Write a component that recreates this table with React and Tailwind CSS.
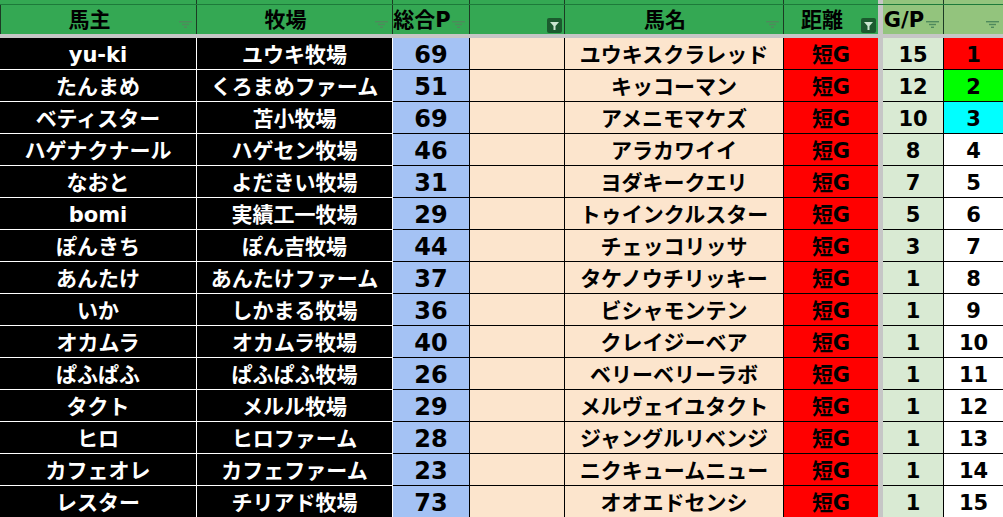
const rows = [
  ['yu-ki', 'ユウキ牧場', 69, 'ユウキスクラレッド', 15, 1],
  ['たんまめ', 'くろまめファーム', 51, 'キッコーマン', 12, 2],
  ['ベティスター', '苫小牧場', 69, 'アメニモマケズ', 10, 3],
  ['ハゲナクナール', 'ハゲセン牧場', 46, 'アラカワイイ', 8, 4],
  ['なおと', 'よだきい牧場', 31, 'ヨダキークエリ', 7, 5],
  ['bomi', '実績工一牧場', 29, 'トゥインクルスター', 5, 6],
  ['ぽんきち', 'ぽん吉牧場', 44, 'チェッコリッサ', 3, 7],
  ['あんたけ', 'あんたけファーム', 37, 'タケノウチリッキー', 1, 8],
  ['いか', 'しかまる牧場', 36, 'ビシャモンテン', 1, 9],
  ['オカムラ', 'オカムラ牧場', 40, 'クレイジーベア', 1, 10],
  ['ぱふぱふ', 'ぱふぱふ牧場', 26, 'ベリーベリーラボ', 1, 11],
  ['タクト', 'メルル牧場', 29, 'メルヴェイユタクト', 1, 12],
  ['ヒロ', 'ヒロファーム', 28, 'ジャングルリベンジ', 1, 13],
  ['カフェオレ', 'カフェファーム', 23, 'ニクキュームニュー', 1, 14],
  ['レスター', 'チリアド牧場', 73, 'オオエドセンシ', 1, 15],
]

const grid = 'grid grid-cols-[197px_196px_77px_95px_219px_94px_5px_61px_59px]'

function FilterIcon() {
  return (
    <svg width="13" height="7" viewBox="0 0 13 7" className="absolute right-[4px] bottom-[6px]">
      <rect x="0" y="0" width="13" height="1.4" fill="#4f8a5c" />
      <rect x="3" y="2.8" width="7" height="1.4" fill="#4f8a5c" />
      <rect x="5" y="5.6" width="3" height="1.4" fill="#4f8a5c" />
    </svg>
  )
}

function ActiveFilter() {
  return (
    <div className="absolute right-[2px] bottom-[1px] w-[15px] h-[15px] rounded-[2px] bg-[#1b5a2e] flex items-center justify-center">
      <svg width="11" height="11" viewBox="0 0 11 11">
        <path d="M1 2 H10 L6.5 6 V10 H4.5 V6 Z" fill="#c9e6cf" />
      </svg>
    </div>
  )
}

function Head({ label, light, active, last }) {
  return (
    <div
      className={`relative flex items-center justify-center pt-[2px] pr-[18px] text-[21px] font-bold text-black whitespace-nowrap ${
        light ? 'bg-[#93c47d]' : 'bg-[#34a853]'
      } ${last ? '' : 'border-r border-[#1c3b24]'}`}
    >
      {label}
      {active ? <ActiveFilter /> : <FilterIcon />}
    </div>
  )
}

function Cell({ children, bg, white, rb = 'border-black', bb = 'border-black', noRight, size = 'text-[21px]' }) {
  return (
    <div
      className={`flex items-center justify-center pt-[3px] border-b ${bb} ${noRight ? '' : `border-r ${rb}`} ${bg} ${
        white ? 'text-white' : 'text-black'
      } ${size} font-bold whitespace-nowrap overflow-hidden`}
    >
      {children}
    </div>
  )
}

const rankBg = (r) => (r === 1 ? 'bg-[#ff0000]' : r === 2 ? 'bg-[#00ff00]' : r === 3 ? 'bg-[#00ffff]' : 'bg-white')

export default function App() {
  return (
    <div className="w-[1003px] h-[517px] overflow-hidden bg-white font-['DejaVu_Sans','Noto_Sans_CJK_JP',sans-serif] leading-none">
      {/* clipped row above header */}
      <div className={`${grid} h-[5px] border-b border-[#1d7a3a]`}>
        <div className="bg-[#34a853] border-r border-[#1c3b24]" />
        <div className="bg-[#34a853] border-r border-[#1c3b24]" />
        <div className="bg-[#34a853] border-r border-[#1c3b24]" />
        <div className="bg-[#34a853] border-r border-[#1c3b24]" />
        <div className="bg-[#34a853] border-r border-[#1c3b24]" />
        <div className="bg-[#34a853]" />
        <div className="bg-[#c6c6c6]" />
        <div className="bg-[#93c47d] border-r border-[#1c3b24]" />
        <div className="bg-[#93c47d]" />
      </div>

      <div className={`${grid} h-[29px]`}>
        <div className="relative flex items-center justify-center pt-[2px] pr-[18px] text-[21px] font-bold bg-[#34a853] border-l border-r border-[#1c3b24]">
          馬主
          <FilterIcon />
        </div>
        <Head label="牧場" />
        <Head label="総合P" />
        <Head label="" active />
        <Head label="馬名" />
        <Head label="距離" active last />
        <div className="bg-[#c6c6c6]" />
        <Head label="G/P" light />
        <Head label="" light last />
      </div>

      <div className="h-[4px] bg-[#c6c6c6]" />

      {rows.map(([owner, farm, pts, horse, gp, rank]) => (
        <div key={rank} className={`${grid} h-[32px]`}>
          <Cell bg="bg-black" white rb="border-white" bb="border-white">{owner}</Cell>
          <Cell bg="bg-black" white bb="border-white">{farm}</Cell>
          <Cell bg="bg-[#a4c2f4]" size="text-[24px]">{pts}</Cell>
          <Cell bg="bg-[#fce5cd]" />
          <Cell bg="bg-[#fce5cd]">{horse}</Cell>
          <Cell bg="bg-[#ff0000]" noRight>短G</Cell>
          <div className="bg-[#c6c6c6]" />
          <Cell bg="bg-[#d9ead3]">{gp}</Cell>
          <Cell bg={rankBg(rank)} noRight>{rank}</Cell>
        </div>
      ))}
    </div>
  )
}
